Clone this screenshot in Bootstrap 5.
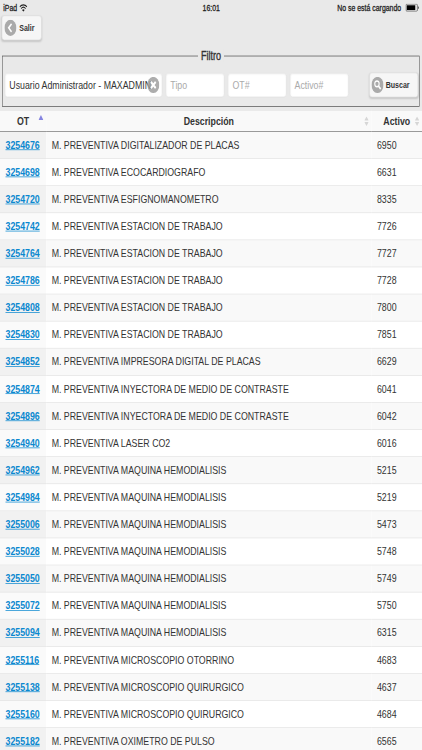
<!DOCTYPE html>
<html lang="es">
<head>
<meta charset="utf-8">
<meta name="viewport" content="width=device-width, initial-scale=1">
<title>Filtro</title>
<link href="https://cdn.jsdelivr.net/npm/bootstrap@5.3.0/dist/css/bootstrap.min.css" rel="stylesheet">
<style>
html, body { height: 100%; overflow: hidden; }
body { font-family: "Liberation Sans", Arial, sans-serif; font-size: 16px; line-height: 20px; color: #333; background: #fff; }
.viewport { width: 422px; height: 750px; }
/* the 768x1024 tablet canvas is shown squeezed into the window */
.tablet { width: 768px; height: 1024px; transform: scale(.5495, .7324); transform-origin: 0 0; background: #e9e9e9; }
.status { height: 21px; padding: 0 5px 0 6px; font-size: 12.6px; line-height: 22px; color: #222; -webkit-text-stroke: .4px #222; }
.status > * { flex: 1 1 0; }
.tool { height: 34px; border: 1px solid #ddd; border-radius: 5px; background: #f6f6f6; box-shadow: 0 1px 3px rgba(0,0,0,.15); font-size: 12.8px; font-weight: 700; color: #333; padding: 0 0 0 4px; gap: 5px; line-height: 16px; }
.salir { width: 73px; margin-left: 3px; }
.buscar { width: 89px; gap: 4px; padding-left: 3px; }
.filters { margin: 11px 4px 0 4px; height: 80px; border: 1.5px solid #555; }
.filters legend { font-size: 16.5px; line-height: 20px; height: 20px; margin: 0 auto; width: 46px; float: none; background: #e9e9e9; -webkit-text-stroke: .5px #333; }
.fields { padding: 13px 2px 0 3px; }
.field { height: 34px; border: 1px solid #e0e0e0; border-radius: 5px; background: #fff; padding: 0 8px; box-shadow: inset 0 1px 3px rgba(0,0,0,.1); overflow: hidden; white-space: nowrap; color: #aaa; }
.owner { width: 288px; color: #333; }
.clear-btn { right: 5px; }
.short { width: 108px; margin-left: 5px; }
.sort { right: 5px; top: 4px; }
.sort-up { right: 5px; top: 2px; }
.orders { border-collapse: collapse; table-layout: fixed; width: 768px; margin: 4px 0 0; background: #fff; }
.orders th { height: 29px; padding: 0; background: #f9f9f9; border-top: 1px solid #ddd; border-bottom: 1.5px solid #777; text-align: center; }
.orders td { height: 37px; padding: 0 0 0 10px; border-bottom: 1px solid #e4e4e4; white-space: nowrap; }
.orders tr:nth-child(odd) td { background: #f9f9f9; }
.orders tr:nth-child(even) td { background: #fff; }
.orders tbody tr:nth-child(odd) td:first-child { background: #f1f1f1; }
.orders tbody tr:nth-child(even) td:first-child { background: #fafafa; }
.orders a { color: #0a88cf; font-weight: 700; }
</style>
<script src="https://cdn.jsdelivr.net/npm/bootstrap@5.3.0/dist/js/bootstrap.bundle.min.js"></script>
</head>
<body>
<div class="viewport overflow-hidden">
<div class="tablet overflow-hidden">
  <div class="status d-flex">
    <div class="d-flex align-items-center gap-1"><span>iPad</span>
      <svg width="15" height="11" viewBox="0 0 15 11" fill="none" stroke="#222" stroke-width="1.5"><path d="M1 4.2a9.5 9.5 0 0 1 13 0M3.4 6.7a6 6 0 0 1 8.2 0"/><path d="M5.2 8.6a3.4 3.4 0 0 1 4.6 0L7.5 11z" fill="#222" stroke="none"/></svg>
    </div>
    <div class="text-center">16:01</div>
    <div class="d-flex align-items-center justify-content-end gap-2"><span>No se está cargando</span>
      <svg width="25" height="11" viewBox="0 0 25 11"><rect x=".6" y=".6" width="21" height="9.8" rx="1.8" fill="none" stroke="#444"/><rect x="2.2" y="2.2" width="15.5" height="6.6" fill="#000"/><path d="M23 3.5c2 .6 2 3.4 0 4z" fill="#444"/></svg>
    </div>
  </div>
  <button class="tool salir d-flex align-items-center">
    <svg width="22" height="22" viewBox="0 0 22 22"><circle cx="11" cy="11" r="11" fill="#aaa"/><path d="M13 5.5 7.8 11l5.2 5.5" fill="none" stroke="#fff" stroke-width="2.6"/></svg>
    <span>Salir</span>
  </button>
  <fieldset class="filters">
    <legend class="text-center">Filtro</legend>
    <div class="fields d-flex align-items-center">
      <div class="field owner position-relative d-flex align-items-center"><span>Usuario Administrador - MAXADMIN</span>
        <svg class="clear-btn position-absolute" width="22" height="22" viewBox="0 0 22 22"><circle cx="11" cy="11" r="11" fill="#999" fill-opacity=".8"/><path d="m6.7 6.7 8.6 8.6m0-8.6-8.6 8.6" stroke="#fff" stroke-width="3.2"/></svg>
      </div>
      <div class="field short d-flex align-items-center">Tipo</div>
      <div class="field short d-flex align-items-center">OT#</div>
      <div class="field short d-flex align-items-center">Activo#</div>
      <button class="tool buscar d-flex align-items-center ms-auto">
        <svg width="22" height="22" viewBox="0 0 22 22"><circle cx="11" cy="11" r="11" fill="#aaa"/><circle cx="10" cy="9.5" r="4" fill="none" stroke="#fff" stroke-width="2"/><path d="m12.8 12.5 4 4" stroke="#fff" stroke-width="2.6"/></svg>
        <span>Buscar</span>
      </button>
    </div>
  </fieldset>
  <table class="orders">
    <colgroup><col style="width:84px"><col style="width:592px"><col style="width:92px"></colgroup>
    <thead><tr>
      <th><div class="position-relative">OT<svg class="sort-up position-absolute" width="9" height="7" viewBox="0 0 9 7"><path d="M4.5 0 9 7H0z" fill="#8584e0"/></svg></div></th>
      <th><div class="position-relative">Descripción<svg class="sort position-absolute" width="8" height="13" viewBox="0 0 8 13"><path d="M4 0 8 5.5H0zM4 13 0 7.5h8z" fill="#d6d6d6"/></svg></div></th>
      <th><div class="position-relative">Activo<svg class="sort position-absolute" width="8" height="13" viewBox="0 0 8 13"><path d="M4 0 8 5.5H0zM4 13 0 7.5h8z" fill="#d6d6d6"/></svg></div></th>
    </tr></thead>
    <tbody>
      <tr><td><a href="#">3254676</a></td><td>M. PREVENTIVA DIGITALIZADOR DE PLACAS</td><td>6950</td></tr>
      <tr><td><a href="#">3254698</a></td><td>M. PREVENTIVA ECOCARDIOGRAFO</td><td>6631</td></tr>
      <tr><td><a href="#">3254720</a></td><td>M. PREVENTIVA ESFIGNOMANOMETRO</td><td>8335</td></tr>
      <tr><td><a href="#">3254742</a></td><td>M. PREVENTIVA ESTACION DE TRABAJO</td><td>7726</td></tr>
      <tr><td><a href="#">3254764</a></td><td>M. PREVENTIVA ESTACION DE TRABAJO</td><td>7727</td></tr>
      <tr><td><a href="#">3254786</a></td><td>M. PREVENTIVA ESTACION DE TRABAJO</td><td>7728</td></tr>
      <tr><td><a href="#">3254808</a></td><td>M. PREVENTIVA ESTACION DE TRABAJO</td><td>7800</td></tr>
      <tr><td><a href="#">3254830</a></td><td>M. PREVENTIVA ESTACION DE TRABAJO</td><td>7851</td></tr>
      <tr><td><a href="#">3254852</a></td><td>M. PREVENTIVA IMPRESORA DIGITAL DE PLACAS</td><td>6629</td></tr>
      <tr><td><a href="#">3254874</a></td><td>M. PREVENTIVA INYECTORA DE MEDIO DE CONTRASTE</td><td>6041</td></tr>
      <tr><td><a href="#">3254896</a></td><td>M. PREVENTIVA INYECTORA DE MEDIO DE CONTRASTE</td><td>6042</td></tr>
      <tr><td><a href="#">3254940</a></td><td>M. PREVENTIVA LASER CO2</td><td>6016</td></tr>
      <tr><td><a href="#">3254962</a></td><td>M. PREVENTIVA MAQUINA HEMODIALISIS</td><td>5215</td></tr>
      <tr><td><a href="#">3254984</a></td><td>M. PREVENTIVA MAQUINA HEMODIALISIS</td><td>5219</td></tr>
      <tr><td><a href="#">3255006</a></td><td>M. PREVENTIVA MAQUINA HEMODIALISIS</td><td>5473</td></tr>
      <tr><td><a href="#">3255028</a></td><td>M. PREVENTIVA MAQUINA HEMODIALISIS</td><td>5748</td></tr>
      <tr><td><a href="#">3255050</a></td><td>M. PREVENTIVA MAQUINA HEMODIALISIS</td><td>5749</td></tr>
      <tr><td><a href="#">3255072</a></td><td>M. PREVENTIVA MAQUINA HEMODIALISIS</td><td>5750</td></tr>
      <tr><td><a href="#">3255094</a></td><td>M. PREVENTIVA MAQUINA HEMODIALISIS</td><td>6315</td></tr>
      <tr><td><a href="#">3255116</a></td><td>M. PREVENTIVA MICROSCOPIO OTORRINO</td><td>4683</td></tr>
      <tr><td><a href="#">3255138</a></td><td>M. PREVENTIVA MICROSCOPIO QUIRURGICO</td><td>4637</td></tr>
      <tr><td><a href="#">3255160</a></td><td>M. PREVENTIVA MICROSCOPIO QUIRURGICO</td><td>4684</td></tr>
      <tr><td><a href="#">3255182</a></td><td>M. PREVENTIVA OXIMETRO DE PULSO</td><td>6565</td></tr>
    </tbody>
  </table>
</div>
</div>
</body>
</html>
